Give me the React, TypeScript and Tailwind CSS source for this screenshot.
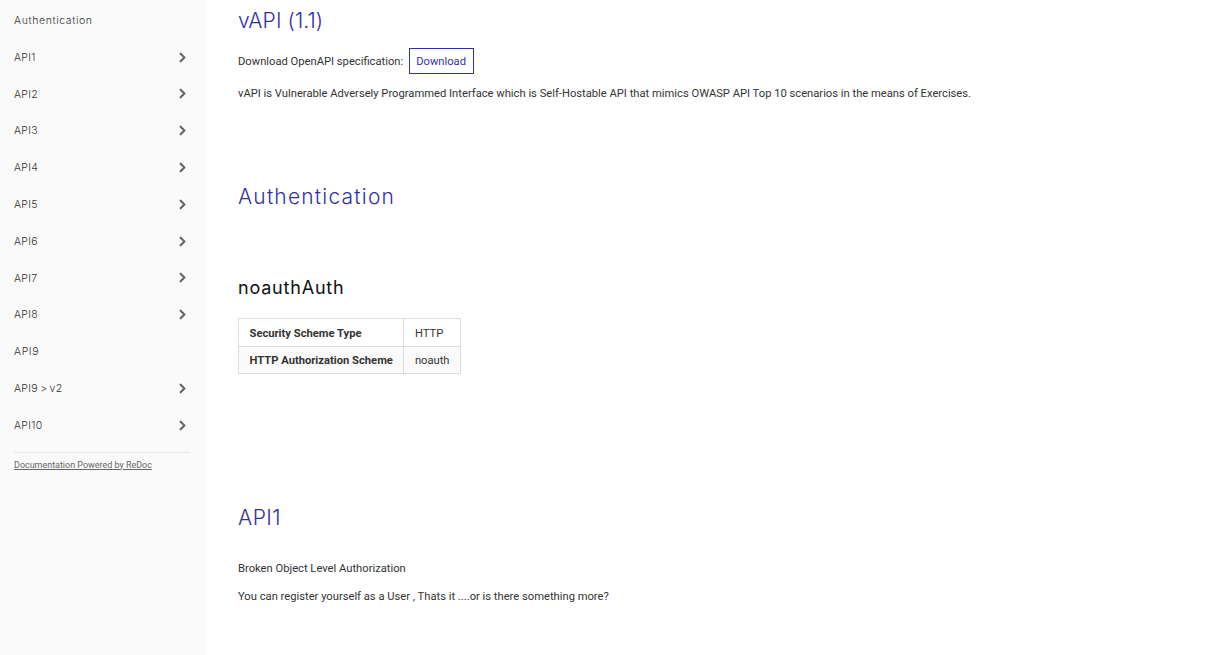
import { ChevronRight } from 'lucide-react';

const navItems = [
  { label: 'Authentication', arrow: false },
  { label: 'API1', arrow: true },
  { label: 'API2', arrow: true },
  { label: 'API3', arrow: true },
  { label: 'API4', arrow: true },
  { label: 'API5', arrow: true },
  { label: 'API6', arrow: true },
  { label: 'API7', arrow: true },
  { label: 'API8', arrow: true },
  { label: 'API9', arrow: false },
  { label: 'API9 > v2', arrow: true },
  { label: 'API10', arrow: true },
];

export default function App() {
  return (
    <div className="flex h-[655px] overflow-hidden bg-white font-['Roboto',sans-serif] text-[11.2px] leading-[16.8px] text-[#333333]">
      {/* Sidebar */}
      <aside className="w-[206px] shrink-0 bg-[#fafafa] px-[14px] pt-[2px] font-['Inter',sans-serif] text-[#333333]">
        <ul>
          {navItems.map(item => (
            <li key={item.label} className="flex h-[36.8px] items-center justify-between text-[10.5px] font-light tracking-[0.3px] [word-spacing:-1px]">
              <span className={item.arrow ? 'pt-[2px]' : 'pt-[1px] tracking-[0.6px]'}>{item.label}</span>
              {item.arrow && <ChevronRight className="mr-[2px] h-[15px] w-[15px] text-[#666666]" strokeWidth={3.5} />}
            </li>
          ))}
        </ul>
        <div className="mt-[8px] w-[176px] border-t border-[#e8e8e8] pt-[5px] font-['Roboto',sans-serif] text-[8.96px] leading-[14px] text-[#666666] underline">
          Documentation Powered by ReDoc
        </div>
      </aside>

      {/* Main Content */}
      <main className="flex-1 pl-[32px]">
        <h1 className="mt-[8px] font-['Inter',sans-serif] text-[21px] leading-[26px] font-light tracking-[0.1px] text-[#32329f]">vAPI (1.1)</h1>
        <div className="mt-[14px] flex items-center gap-[6px]">
          <span className="pt-[2px]">Download OpenAPI specification:</span>
          <a className="border border-[#32329f] pt-[4.6px] pr-[7px] pb-[2.6px] pl-[6px] text-[#32329f]">Download</a>
        </div>
        <p className="mt-[11.8px]">
          vAPI is Vulnerable Adversely Programmed Interface which is Self-Hostable API that mimics OWASP API Top 10 scenarios in the means of Exercises.
        </p>

        <h2 className="mt-[81.4px] font-['Inter',sans-serif] text-[21px] leading-[26px] font-light tracking-[1.2px] text-[#32329f]">Authentication</h2>
        <h3 className="mt-[65px] font-['Inter',sans-serif] text-[18px] leading-[26px] font-normal tracking-[0.8px] text-[#111111]">noauthAuth</h3>

        <table className="mt-[17px] border-collapse">
          <tbody>
            <tr>
              <td className="border border-[#dddddd] px-[10.5px] pt-[7px] pb-[3px] font-bold">Security Scheme Type</td>
              <td className="border border-[#dddddd] px-[10.5px] pt-[7px] pb-[3px]">HTTP</td>
            </tr>
            <tr className="bg-[#fafafa]">
              <td className="border border-[#dddddd] px-[10.5px] pt-[6px] pb-[3px] font-bold">HTTP Authorization Scheme</td>
              <td className="border border-[#dddddd] px-[10.5px] pt-[6px] pb-[3px]">noauth</td>
            </tr>
          </tbody>
        </table>

        <h2 className="mt-[131px] font-['Inter',sans-serif] text-[21px] leading-[26px] font-light tracking-[0.5px] text-[#32329f]">API1</h2>
        <p className="mt-[30px]">Broken Object Level Authorization</p>
        <p className="mt-[11.6px]">You can register yourself as a User , Thats it ....or is there something more?</p>
      </main>
    </div>
  );
}
